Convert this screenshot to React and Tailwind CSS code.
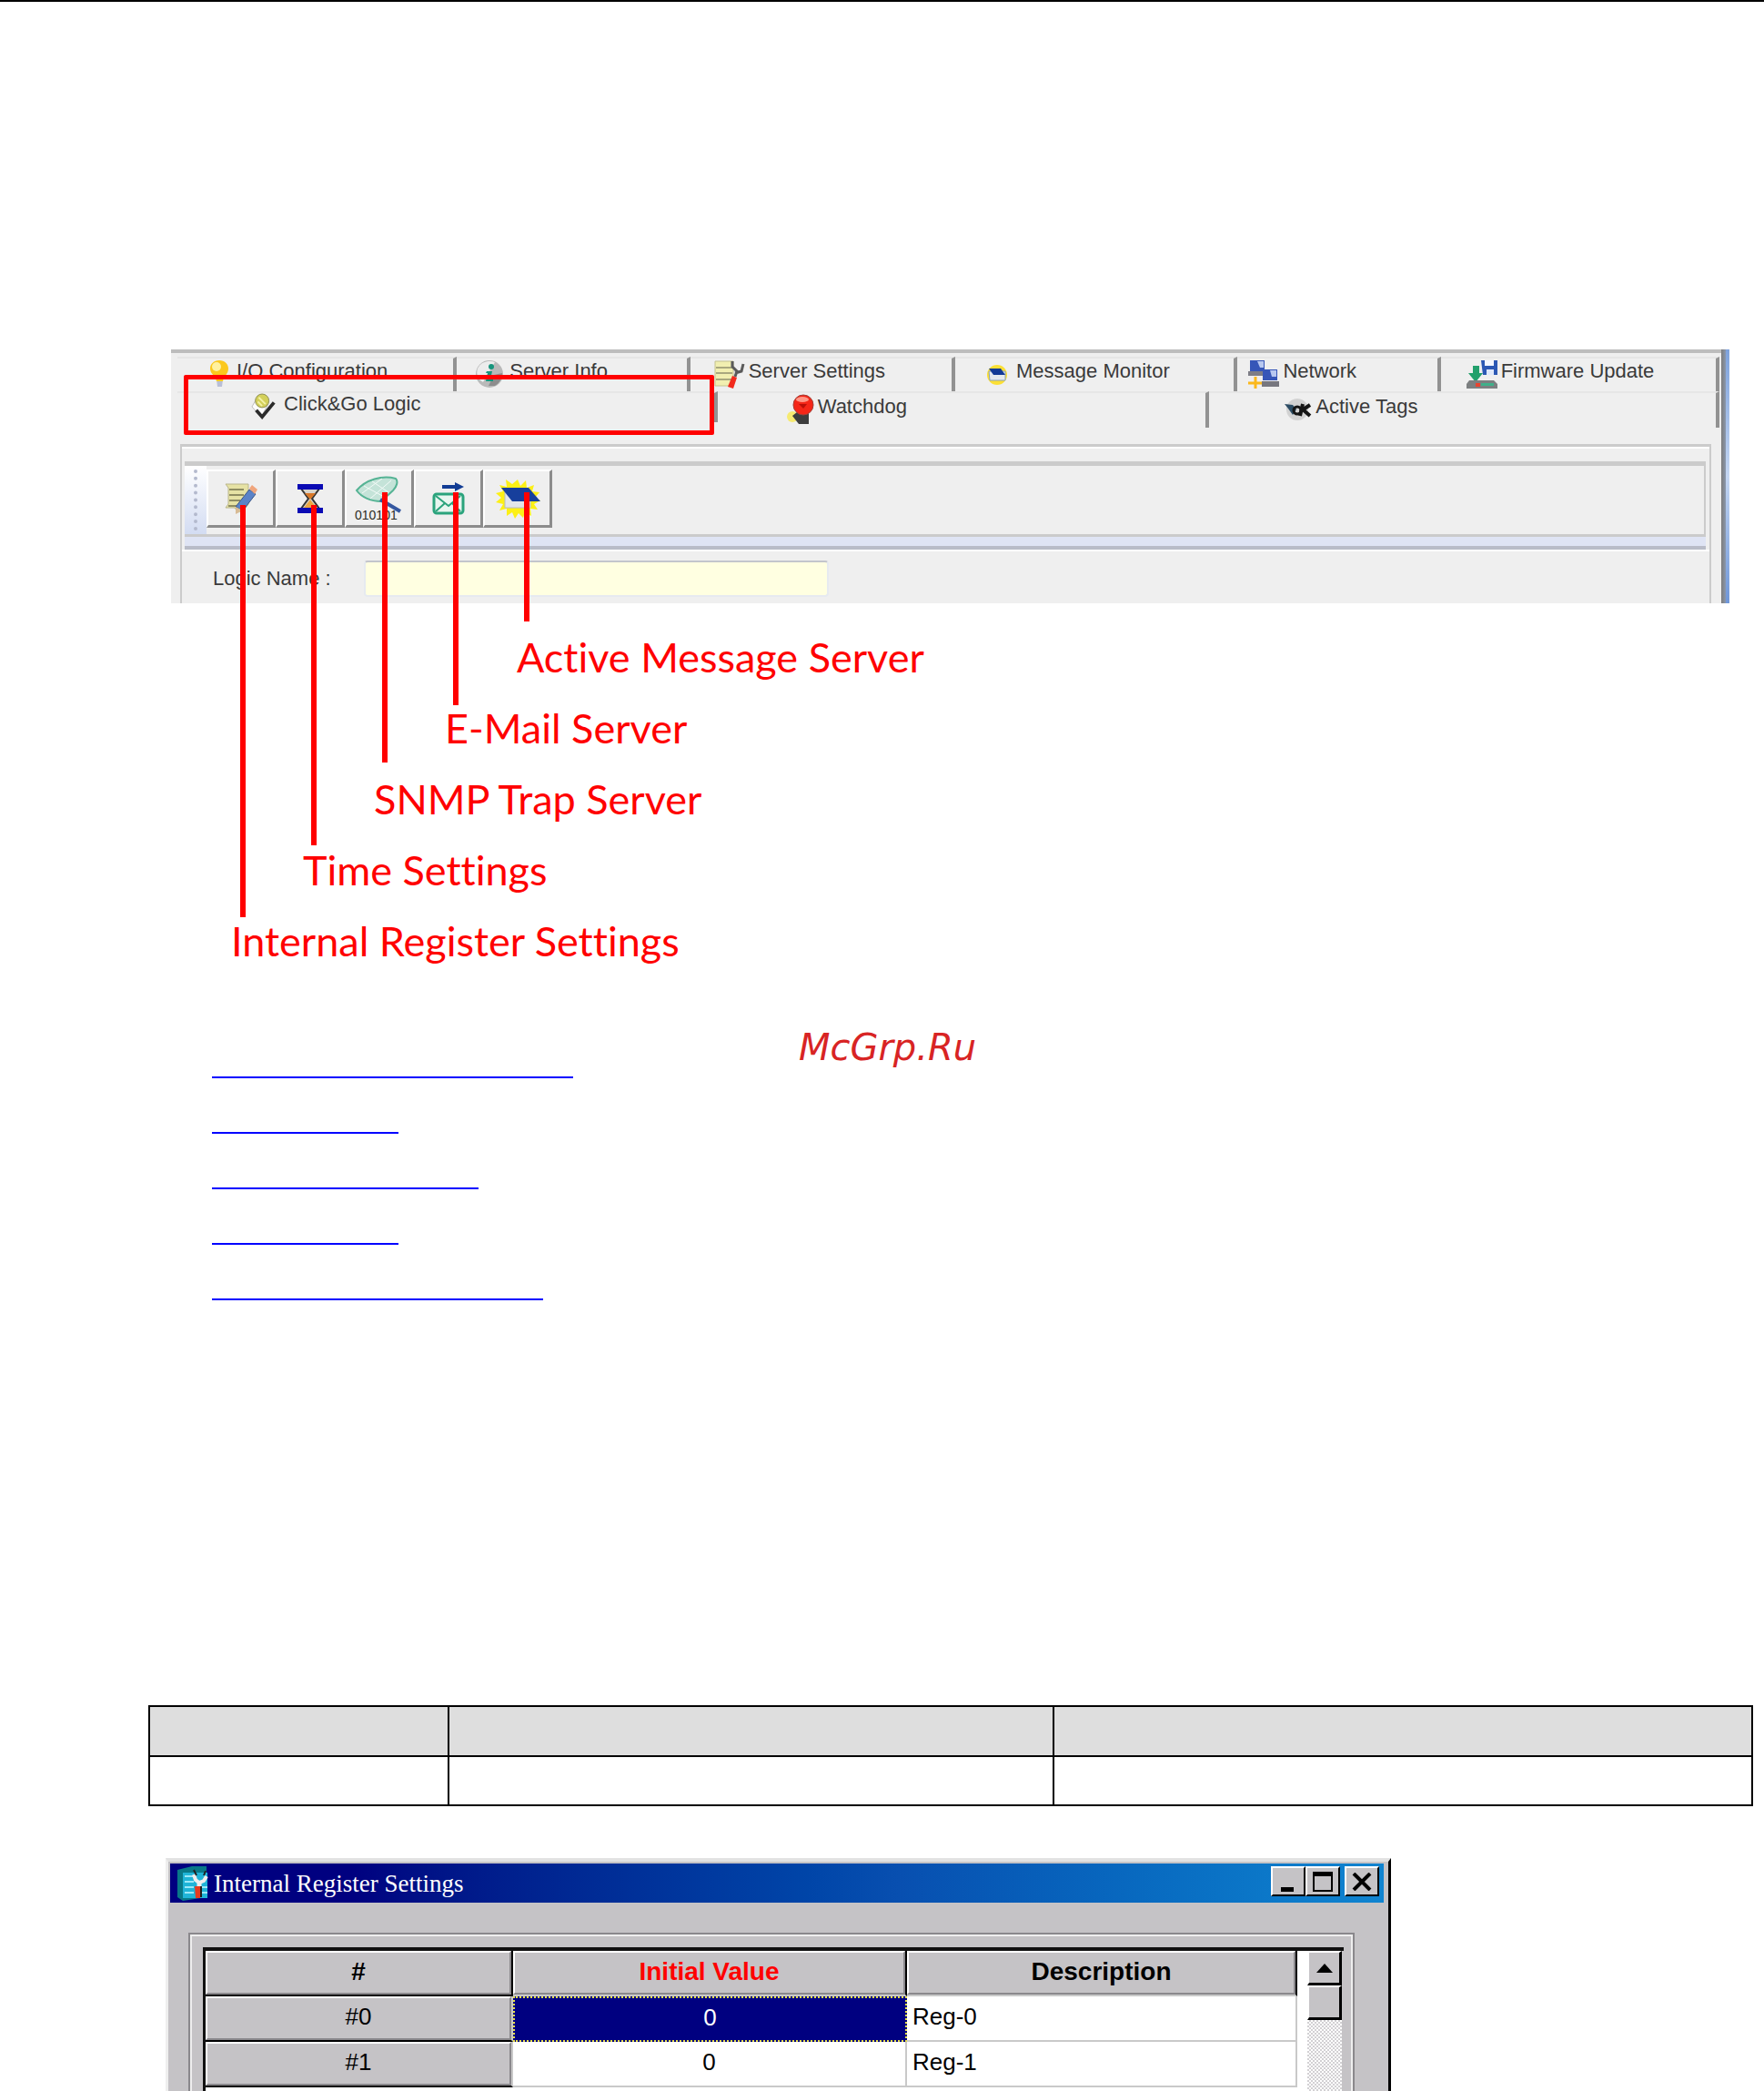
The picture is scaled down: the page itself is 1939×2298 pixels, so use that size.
const BulbIcon = () => (
  <svg width="22" height="32" viewBox="0 0 22 32" aria-hidden="true">
    <path d="M8 22h7l-1 8h-5z" fill="#b9bfd6" />
    <path d="M11 1c6 0 10 4 10 9 0 6-5 8-6 14H8C7 18 1 16 1 10c0-5 4-9 10-9z" fill="#fbc81e" />
    <ellipse cx="8" cy="8" rx="5" ry="5" fill="#fff1a0" />
  </svg>
)

const InfoIcon = () => (
  <svg width="32" height="32" viewBox="0 0 32 32" aria-hidden="true">
    <circle cx="16" cy="16" r="15" fill="#b9b9b9" />
    <path d="M3 10C7 2 16 1 22 3L9 25C3 22 1 16 3 10z" fill="#ececec" />
    <path d="M22 29c5-3 8-8 8-14l-9 2-6 12z" fill="#8d8d8d" />
    <circle cx="18" cy="8" r="3" fill="#16957c" />
    <path d="M13 13h6l-2 9h3v2h-8l2-9h-2z" fill="#16957c" />
  </svg>
)

const SettingsIcon = () => (
  <svg width="34" height="34" viewBox="0 0 34 34" aria-hidden="true">
    <path d="M1 3h20v27H1z" fill="#f1efb0" stroke="#c4c28e" />
    <path d="M2 10h18M2 16h18M2 23h18" stroke="#a9a87e" strokeWidth="2" />
    <path d="M20 3v6l5 5-2 6M32 6l-2 8-7 2" fill="none" stroke="#5a5a5a" strokeWidth="3" />
    <path d="M20 19l5 2-4 12-6-2z" fill="#f22a1c" />
  </svg>
)

const MessageIcon = () => (
  <svg width="25" height="25" viewBox="0 0 25 25" aria-hidden="true">
    <circle cx="12" cy="13" r="11" fill="#fbdf35" />
    <path d="M3 9h18v10H4z" fill="#e4e9ee" stroke="#8aa0b8" />
    <path d="M3 6h13l5 7H8z" fill="#123a96" />
  </svg>
)

const NetworkIcon = () => (
  <svg width="34" height="34" viewBox="0 0 34 34" aria-hidden="true">
    <path d="M2 2h16v12H2z" fill="#3656b8" />
    <path d="M10 3h7v7h-4z" fill="#b8c8f0" />
    <path d="M0 14h18v5H0z" fill="#7d7d86" />
    <path d="M16 12h16v12H16z" fill="#3656b8" />
    <path d="M24 13h7v7h-5z" fill="#b8c8f0" />
    <path d="M15 25h19v6H15z" fill="#77777f" />
    <path d="M0 27h15M8 20v13" stroke="#fbb81c" strokeWidth="3" />
  </svg>
)

const FirmwareIcon = () => (
  <svg width="34" height="34" viewBox="0 0 34 34" aria-hidden="true">
    <path d="M16 2h18v16H18z" fill="#2c58b4" />
    <path d="M20 2h10v6H20z" fill="#f4f7ff" />
    <path d="M22 12h8v6h-8z" fill="#dfe8fa" />
    <path d="M7 8h7v8h4l-8 10-8-10h5z" fill="#22a06c" />
    <path d="M3 24h27l4 4v5H0v-5z" fill="#7c7f80" />
    <path d="M16 27h14v3H16z" fill="#3fb08a" />
    <path d="M10 27h5v4h-5z" fill="#e8432f" />
  </svg>
)

const LogicIcon = () => (
  <svg width="28" height="30" viewBox="0 0 30 32" aria-hidden="true">
    <path d="M1 16L8 4l12 9-8 15z" fill="#fdfdfd" stroke="#b9b9b9" />
    <circle cx="13" cy="9" r="8" fill="#d3d05a" stroke="#8a8a50" />
    <path d="M9 5l8 8M8 10l5 5" stroke="#f4f2a8" strokeWidth="2" />
    <path d="M6 20l7 8L27 11" fill="none" stroke="#2b2b2b" strokeWidth="4" />
  </svg>
)

const WatchdogIcon = () => (
  <svg width="31" height="34" viewBox="0 0 31 34" aria-hidden="true">
    <circle cx="7" cy="25" r="6" fill="#f6ea72" />
    <path d="M12 20h13v13H14l-7-9z" fill="#3d3d3d" />
    <circle cx="19" cy="12" r="11" fill="#f52617" stroke="#a04038" />
    <ellipse cx="18" cy="6" rx="7" ry="3" fill="#ff9585" />
    <path d="M14 11h9l-4 5z" fill="#ba0f08" />
  </svg>
)

const TagsIcon = () => (
  <svg width="30" height="30" viewBox="0 0 30 30" aria-hidden="true">
    <circle cx="14" cy="15" r="12" fill="#d2d2d2" />
    <path d="M0 9l9 1 4 5-4 6-5-7z" fill="#2c4c64" />
    <circle cx="14" cy="16" r="4" fill="none" stroke="#151515" strokeWidth="3" />
    <path d="M20 9l-3 13M19 16l9-6M20 15l8 7" stroke="#151515" strokeWidth="4" />
  </svg>
)

const NoteIcon = () => (
  <svg width="36" height="36" viewBox="0 0 36 36" aria-hidden="true">
    <path d="M1 2h25v22l-6 8h-6l-3-4H1l3-4V6z" fill="#e6e2a4" stroke="#b9b58a" />
    <path d="M5 8h16M5 14h16M5 20h12M4 26h10" stroke="#8f8d62" strokeWidth="2" />
    <path d="M27 8l7 5-14 18-8-4z" fill="#5b83c8" stroke="#3b5788" />
    <path d="M27 7l3-4 6 5-3 5z" fill="#f0a57c" />
    <path d="M12 27l8 4-8 4z" fill="#d8bb94" />
  </svg>
)

const HourglassIcon = () => (
  <svg width="28" height="34" viewBox="0 0 28 34" aria-hidden="true">
    <path d="M4 6h20l-8 11 8 11H4l8-11z" fill="#d8d4cc" stroke="#333" strokeWidth="2" />
    <path d="M8 11h12l-6 7z" fill="#d87828" />
    <path d="M14 18l7 9H7z" fill="#eba743" />
    <path d="M0 1h28v6H0zM0 27h28v6H0z" fill="#0a0ab4" />
  </svg>
)

const NetIcon = () => (
  <svg width="54" height="50" viewBox="0 0 54 50" aria-hidden="true">
    <path d="M2 16C12 4 30-1 45 3c3 3 1 9-3 13L29 28C17 28 7 23 2 16z" fill="#c4e3d8" stroke="#55b394" strokeWidth="2" />
    <path d="M10 11l24 13M19 6l18 12M8 19L30 3M17 25L40 5" stroke="#f4fbf8" />
    <path d="M28 26l22 13" stroke="#3558a0" strokeWidth="4" />
    <text x="0" y="48" fontSize="14" fontFamily="Liberation Sans, sans-serif" fill="#2c2c24">010101</text>
  </svg>
)

const MailIcon = () => (
  <svg width="38" height="36" viewBox="0 0 38 36" aria-hidden="true">
    <path d="M12 5h17" stroke="#123c94" strokeWidth="4" />
    <path d="M26 0l10 5-10 5z" fill="#123c94" />
    <rect x="3" y="13" width="32" height="21" rx="3" fill="#e8f6f0" stroke="#2aa37c" strokeWidth="3" />
    <path d="M5 15l14 11 13-11M5 32l10-9M32 32l-9-9" fill="none" stroke="#2aa37c" strokeWidth="2" />
  </svg>
)

const SunIcon = () => (
  <svg width="52" height="44" viewBox="0 0 52 44" aria-hidden="true">
    <path
      d="M26 1l3 7 6-6 1 8 8-3-2 7 8 1-5 6 6 3-7 4 4 6-8-1 1 8-7-4-2 6-5-5-4 6-3-7-6 4 0-8-8 2 4-7-8-2 6-5-6-5 8-2-4-7 8 2-1-8 7 5z"
      fill="#fdf015"
    />
    <path d="M12 12h28v20H12z" fill="#e3e6ea" stroke="#b8bcc4" />
    <path d="M8 10h30l13 15H20z" fill="#173f9c" />
  </svg>
)

const WindowIcon = () => (
  <svg width="34" height="38" viewBox="0 0 34 38" aria-hidden="true">
    <path d="M0 4L16 0h16v34L6 38l-6-4z" fill="#087888" />
    <path d="M6 7h27v28H6z" fill="#1fb4d8" />
    <path d="M8 11h10M8 17h10M8 23h10M8 29h10M26 23h7M26 29h7" stroke="#9be8f8" strokeWidth="2" />
    <path d="M18 9l2 6 4 3 5-2 3-5" fill="none" stroke="#eee" strokeWidth="4" />
    <path d="M24 17v6" stroke="#eee" strokeWidth="5" />
    <path d="M18 4l3 6M31 5l-2 5" stroke="#222" strokeWidth="2" />
    <path d="M19 22h6v13h-5z" fill="#e63a1e" />
    <path d="M26 22v12" stroke="#222" strokeWidth="2" />
  </svg>
)

const topTabs = [
  { label: 'I/O Configuration', Icon: BulbIcon, pad: 'pl-[35px] gap-2' },
  { label: 'Server Info', Icon: InfoIcon, pad: 'pl-5 gap-1.5' },
  { label: 'Server Settings', Icon: SettingsIcon, pad: 'pl-[26px] gap-1' },
  { label: 'Message Monitor', Icon: MessageIcon, pad: 'pl-[34px] gap-2' },
  { label: 'Network', Icon: NetworkIcon, pad: 'pl-3 gap-1' },
  { label: 'Firmware Update', Icon: FirmwareIcon, pad: 'pl-7 gap-1' },
]

const tools = [
  { name: 'Internal Register Settings', Icon: NoteIcon },
  { name: 'Time Settings', Icon: HourglassIcon },
  { name: 'SNMP Trap Server', Icon: NetIcon },
  { name: 'E-Mail Server', Icon: MailIcon },
  { name: 'Active Message Server', Icon: SunIcon },
]

const callouts = [
  { label: 'Active Message Server', pad: 'pl-[380px]', line: 'left-[388px] top-[157px] h-[142px]' },
  { label: 'E-Mail Server', pad: 'pl-[301px]', line: 'left-[310px] top-[157px] h-[234px]' },
  { label: 'SNMP Trap Server', pad: 'pl-[223px]', line: 'left-[232px] top-[157px] h-[297px]' },
  { label: 'Time Settings', pad: 'pl-[145px]', line: 'left-[154px] top-[171px] h-[374px]' },
  { label: 'Internal Register Settings', pad: 'pl-[66px]', line: 'left-[76px] top-[171px] h-[453px]' },
]

const links = [
  { label: 'Internal Register Settings', width: 'w-[397px]' },
  { label: 'Time Settings', width: 'w-[205px]' },
  { label: 'SNMP Trap Server', width: 'w-[293px]' },
  { label: 'E-Mail Server', width: 'w-[205px]' },
  { label: 'Active Message Server', width: 'w-[364px]' },
]

const bevel = 'bg-[#c5c3c6] border-2 border-t-white border-l-white border-r-[#8a888c] border-b-[#8a888c]'

function Tab({ label, Icon, pad, selected }) {
  return (
    <button
      type="button"
      role="tab"
      aria-selected={!!selected}
      className={`flex items-center whitespace-nowrap border-r-4 border-[#929292] border-t-2 border-t-[#e6e6e6] pb-0.5 ${pad}`}
    >
      <Icon />
      <span className="pb-1.5 leading-6">{label}</span>
    </button>
  )
}

function LogicPanel() {
  return (
    <div className="flex h-[279px] font-['Liberation_Sans',sans-serif] text-[22px] text-[#3a3a3a]">
      <div className="flex flex-1 flex-col border-t-4 border-[#bdbdbd] bg-[#efefef] pt-1">
        <div role="tablist" className="ml-[7px] mr-[2px] flex flex-col">
          <div className="grid h-[38px] grid-cols-[307fr_256fr_291fr_310fr_223fr_306fr]">
            {topTabs.map(t => <Tab key={t.label} {...t} />)}
          </div>
          <div className="grid h-10 grid-cols-[593fr_540fr_560fr]">
            <div className="grid pb-1.5">
              <Tab label="Click&Go Logic" Icon={LogicIcon} pad="pl-[81px] gap-2" selected />
            </div>
            <Tab label="Watchdog" Icon={WatchdogIcon} pad="pl-[75px] gap-1" />
            <Tab label="Active Tags" Icon={TagsIcon} pad="pl-[83px] gap-1" />
          </div>
        </div>

        <div className="ml-2.5 mr-[11px] mt-[18px] flex flex-1 flex-col border-x-2 border-t-3 border-[#cbcbcb]">
          <div className="h-4 border-t-2 border-white" />
          <div className="ml-[3px] mr-1 flex h-[83px] border-r-2 border-t-5 border-b-3 border-[#cbcbcb]">
            <div className="flex w-6 justify-center bg-linear-to-b from-white to-[#d3dcf2] py-1">
              <div className="border-l-4 border-dotted border-[#b4bace]" />
            </div>
            <div className="flex h-[68px] pt-1">
              {tools.map(({ name, Icon }) => (
                <button
                  key={name}
                  type="button"
                  aria-label={name}
                  className="flex w-[76px] items-center justify-center border-2 border-r-3 border-b-3 border-white border-r-[#8c8c8c] border-b-[#8c8c8c]"
                >
                  <Icon />
                </button>
              ))}
            </div>
          </div>
          <div className="ml-[3px] mr-1 h-3.5 border-b-4 border-[#b9bcc8] bg-[#dfe4f4]" />
          <div className="flex flex-1 items-start border-t-2 border-white pl-[34px] pt-2.5">
            <label htmlFor="logic-name" className="w-[166px] leading-10">Logic Name :</label>
            <input
              id="logic-name"
              className="h-10 w-[511px] rounded-sm border-2 border-[#e6eaf0] border-t-[#c3c5cc] bg-[#ffffe1] px-2"
            />
          </div>
        </div>
      </div>
      <div className="w-[5px] bg-linear-to-r from-[#7c7c7c] to-[#8a97ac]" />
      <div className="w-1 bg-linear-to-b from-[#7ea2dc] via-[#c4d6f2] to-[#6f96d8]" />
    </div>
  )
}

function RegisterWindow() {
  const head = `${bevel} h-12 p-0 align-middle text-center font-bold`
  const side = `${bevel} h-12 p-0 text-center font-normal`
  return (
    <section className="ml-[182px] mr-[410px] border-l-3 border-t-4 border-r-3 border-l-[#eeeeee] border-t-[#e2e2e2] border-r-black bg-[#c5c3c6] font-['Liberation_Sans',sans-serif] text-black">
      <div className="border-l-2 border-t-2 border-r-5 border-[#c5c3c6]">
        <header className="flex h-[43px] items-center bg-linear-to-r from-[#000080] from-15% via-[#084fb0] via-60% to-[#1084d0] pl-2 pr-[5px]">
          <WindowIcon />
          <h2 className="ml-1.5 flex-1 font-['Liberation_Serif',serif] text-[27px] leading-9 text-white">
            Internal Register Settings
          </h2>
          <div className="flex pb-1">
            <button type="button" aria-label="Minimize" className={`${bevel} flex h-[33px] w-[38px] items-end justify-center border-r-black border-b-black`}>
              <svg width="30" height="28" viewBox="0 0 30 28"><path d="M7 20h14v5H7z" /></svg>
            </button>
            <button type="button" aria-label="Maximize" className={`${bevel} flex h-[33px] w-[38px] items-center justify-center border-r-black border-b-black`}>
              <svg width="24" height="24" viewBox="0 0 24 24"><path d="M1 1h22v22H1zM3 6v15h18V6z" fillRule="evenodd" /></svg>
            </button>
            <button type="button" aria-label="Close" className={`${bevel} ml-[5px] flex h-[33px] w-[38px] items-center justify-center border-r-black border-b-black`}>
              <svg width="22" height="20" viewBox="0 0 22 20"><path d="M2 1l18 18M20 1L2 19" stroke="#000" strokeWidth="4" /></svg>
            </button>
          </div>
        </header>
      </div>

      <div className="ml-[22px] mr-[37px] mt-[33px] border-2 border-b-0 border-[#8a888c]">
        <div className="border-x-2 border-t-2 border-x-[#eeeeee] border-t-[#eeeeee] pl-3 pr-2 pt-3">
          <div className="flex border-l-3 border-t-4 border-[#111] bg-white">
            <div className="flex-1">
              <table className="w-full table-fixed border-separate border-spacing-0 text-[26px] leading-8">
                <colgroup>
                  <col className="w-[338px]" />
                  <col />
                  <col className="w-[429px]" />
                </colgroup>
                <thead>
                  <tr className="text-[28px]">
                    <th className="border-b-2 border-r-2 border-black p-0"><div className={`${head} leading-[42px]`}>#</div></th>
                    <th className="border-r-2 border-b-2 border-r-black border-b-[#c9c9c9] p-0 text-[#ff0000]"><div className={`${head} leading-[42px]`}>Initial Value</div></th>
                    <th className="border-r-2 border-b-2 border-r-black border-b-[#c9c9c9] p-0"><div className={`${head} leading-[42px]`}>Description</div></th>
                  </tr>
                </thead>
                <tbody>
                  <tr>
                    <th className="border-b-2 border-r-2 border-black border-r-[#c9c9c9] p-0"><div className={`${side} leading-10`}>#0</div></th>
                    <td className="border-2 border-dotted border-[#e8e04a] bg-[#000080] p-0 pb-1 text-center text-white">0</td>
                    <td className="border-b-2 border-r-2 border-[#c9c9c9] p-0 pb-1 pl-1.5">Reg-0</td>
                  </tr>
                  <tr>
                    <th className="border-b-2 border-r-2 border-black border-r-[#c9c9c9] p-0"><div className={`${side} leading-10`}>#1</div></th>
                    <td className="border-b-2 border-r-2 border-[#c9c9c9] p-0 pb-1 text-center">0</td>
                    <td className="border-b-2 border-r-2 border-[#c9c9c9] p-0 pb-1 pl-1.5">Reg-1</td>
                  </tr>
                </tbody>
              </table>
              <div className="h-1" />
            </div>
            <div className="ml-[11px] flex w-10 flex-col border-r-2 border-[#c5c3c6] bg-[repeating-conic-gradient(#d2d0d3_0_25%,#fff_0_50%)] bg-size-[4px_4px]">
              <button type="button" aria-label="Scroll up" className={`${bevel} flex h-[38px] items-center justify-center border-r-3 border-b-3 border-r-black border-b-black`}>
                <svg width="18" height="10" viewBox="0 0 18 10"><path d="M9 0l9 10H0z" /></svg>
              </button>
              <div className={`${bevel} h-[38px] border-r-3 border-b-3 border-r-black border-b-black`} />
            </div>
          </div>
        </div>
      </div>
    </section>
  )
}

export default function App() {
  return (
    <main className="overflow-hidden border-t-2 border-black bg-white">
      <figure className="relative ml-[188px] mr-[38px] mt-[382px]">
        <LogicPanel />
        <div className="absolute left-3.5 top-7 h-[66px] w-[583px] rounded-xs border-5 border-[#ff0000]" />
        <figcaption className="mt-5">
          {callouts.map(c => (
            <div key={c.label}>
              <div className={`absolute w-1.5 bg-[#ff0000] ${c.line}`} />
              <p className={`font-[Lato,sans-serif] text-[45px] leading-[78px] [font-variant-ligatures:none] whitespace-nowrap text-[#ff0000] ${c.pad}`}>
                {c.label}
              </p>
            </div>
          ))}
        </figcaption>
      </figure>

      <nav className="relative mt-[51px] pl-[233px]">
        <ul>
          {links.map(l => (
            <li key={l.label} className="flex h-[61px] items-end">
              <a href="#registers" aria-label={l.label} className={`h-10 border-b-2 border-[#0000ff] ${l.width}`} />
            </li>
          ))}
        </ul>
        <p className="absolute inset-x-0 top-0.5 pl-3 text-center font-['DejaVu_Sans',sans-serif] text-[40px] leading-[50px] text-[#d82424] italic">
          McGrp.Ru
        </p>
      </nav>

      <div className="ml-[163px] mr-[12px] mt-[445px]">
        <table className="w-full table-fixed border-collapse">
          <colgroup>
            <col className="w-[329px]" />
            <col className="w-[665px]" />
            <col />
          </colgroup>
          <tbody>
            <tr className="h-[55px] bg-[#dedede]">
              <td className="border-2 border-black" />
              <td className="border-2 border-black" />
              <td className="border-2 border-black" />
            </tr>
            <tr className="h-[54px]">
              <td className="border-2 border-black" />
              <td className="border-2 border-black" />
              <td className="border-2 border-black" />
            </tr>
          </tbody>
        </table>
      </div>

      <div id="registers" className="mt-[57px]">
        <RegisterWindow />
      </div>
    </main>
  )
}
